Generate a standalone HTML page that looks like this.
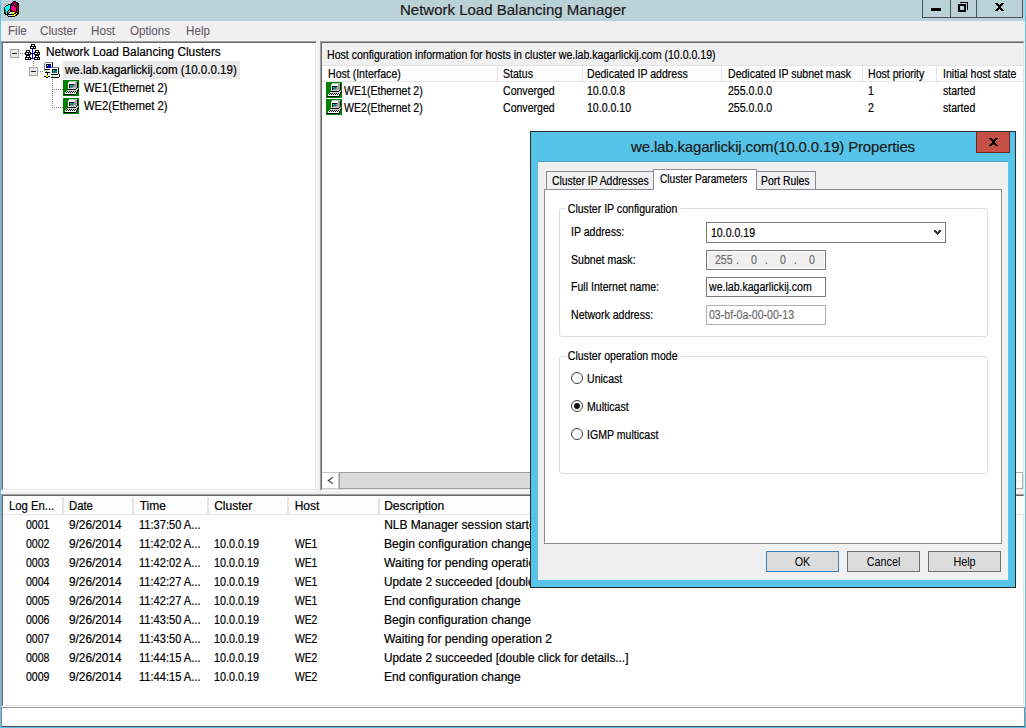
<!DOCTYPE html>
<html><head><meta charset="utf-8">
<style>
*{margin:0;padding:0;box-sizing:border-box}
html,body{width:1026px;height:728px;overflow:hidden;background:#f0f0f0;font-family:"Liberation Sans",sans-serif;color:#000}
.a{position:absolute}
.t{position:absolute;white-space:nowrap;line-height:1;-webkit-text-stroke:0.2px currentColor}
.f11{font-size:12px;transform:scaleX(0.88);transform-origin:0 0}
.f12{font-size:12px}
.sunk{position:absolute;border-top:1px solid #a0a0a0;border-left:1px solid #a0a0a0;border-right:1px solid #fff;border-bottom:1px solid #fff}
.sunk>.in{position:absolute;left:0;top:0;right:0;bottom:0;border-top:1px solid #696969;border-left:1px solid #696969;border-right:1px solid #e3e3e3;border-bottom:1px solid #e3e3e3;background:#fff;overflow:hidden}
.hdr{position:absolute;background:#fdfdfd;border-bottom:1px solid #e5e5e5}
.div{position:absolute;top:1px;width:1px;background:#e5e5e5}
</style></head><body>
<svg width="0" height="0" style="position:absolute"><defs>
<g id="host" shape-rendering="crispEdges"><rect x="0" y="0" width="16" height="16" fill="#008000"/><rect x="6" y="1" width="8" height="1" fill="#c0c0c0"/><rect x="5" y="2" width="1" height="1" fill="#c0c0c0"/><rect x="6" y="2" width="6" height="1" fill="#fff"/><rect x="12" y="2" width="2" height="1" fill="#a0a0a0"/><rect x="14" y="2" width="1" height="1" fill="#000"/><rect x="5" y="3" width="6" height="1" fill="#fff"/><rect x="11" y="3" width="1" height="1" fill="#d0d0d0"/><rect x="12" y="3" width="2" height="1" fill="#a0a0a0"/><rect x="14" y="3" width="1" height="1" fill="#000"/><rect x="5" y="4" width="1" height="1" fill="#fff"/><rect x="6" y="4" width="5" height="1" fill="#000"/><rect x="11" y="4" width="1" height="1" fill="#909090"/><rect x="12" y="4" width="2" height="1" fill="#a0a0a0"/><rect x="14" y="4" width="1" height="1" fill="#000"/><rect x="5" y="5" width="1" height="1" fill="#fff"/><rect x="6" y="5" width="1" height="1" fill="#000"/><rect x="7" y="5" width="1" height="1" fill="#00ffff"/><rect x="8" y="5" width="2" height="1" fill="#008080"/><rect x="10" y="5" width="2" height="1" fill="#909090"/><rect x="12" y="5" width="2" height="1" fill="#a0a0a0"/><rect x="14" y="5" width="1" height="1" fill="#000"/><rect x="5" y="6" width="1" height="1" fill="#fff"/><rect x="6" y="6" width="1" height="1" fill="#000"/><rect x="7" y="6" width="3" height="1" fill="#008080"/><rect x="10" y="6" width="2" height="1" fill="#909090"/><rect x="12" y="6" width="2" height="1" fill="#a0a0a0"/><rect x="14" y="6" width="1" height="1" fill="#000"/><rect x="5" y="7" width="1" height="1" fill="#fff"/><rect x="6" y="7" width="1" height="1" fill="#000"/><rect x="7" y="7" width="4" height="1" fill="#909090"/><rect x="11" y="7" width="1" height="1" fill="#d0d0d0"/><rect x="12" y="7" width="2" height="1" fill="#a0a0a0"/><rect x="14" y="7" width="1" height="1" fill="#000"/><rect x="5" y="8" width="1" height="1" fill="#fff"/><rect x="6" y="8" width="7" height="1" fill="#d0d0d0"/><rect x="13" y="8" width="1" height="1" fill="#000"/><rect x="14" y="8" width="1" height="1" fill="#d0d0d0"/><rect x="5" y="9" width="8" height="1" fill="#000"/><rect x="13" y="9" width="2" height="1" fill="#d0d0d0"/><rect x="15" y="9" width="1" height="1" fill="#000"/><rect x="4" y="10" width="10" height="1" fill="#d0d0d0"/><rect x="14" y="10" width="2" height="1" fill="#000"/><rect x="3" y="11" width="1" height="1" fill="#d0d0d0"/><rect x="4" y="11" width="1" height="1" fill="#000"/><rect x="5" y="11" width="1" height="1" fill="#d0d0d0"/><rect x="6" y="11" width="1" height="1" fill="#000"/><rect x="7" y="11" width="1" height="1" fill="#d0d0d0"/><rect x="8" y="11" width="1" height="1" fill="#000"/><rect x="9" y="11" width="1" height="1" fill="#d0d0d0"/><rect x="10" y="11" width="1" height="1" fill="#000"/><rect x="11" y="11" width="1" height="1" fill="#d0d0d0"/><rect x="12" y="11" width="1" height="1" fill="#000"/><rect x="13" y="11" width="1" height="1" fill="#d0d0d0"/><rect x="14" y="11" width="1" height="1" fill="#000"/><rect x="2" y="12" width="1" height="1" fill="#fff"/><rect x="3" y="12" width="1" height="1" fill="#000"/><rect x="4" y="12" width="1" height="1" fill="#fff"/><rect x="5" y="12" width="1" height="1" fill="#000"/><rect x="6" y="12" width="1" height="1" fill="#fff"/><rect x="7" y="12" width="1" height="1" fill="#000"/><rect x="8" y="12" width="1" height="1" fill="#fff"/><rect x="9" y="12" width="1" height="1" fill="#000"/><rect x="10" y="12" width="1" height="1" fill="#fff"/><rect x="11" y="12" width="1" height="1" fill="#000"/><rect x="12" y="12" width="1" height="1" fill="#fff"/><rect x="13" y="12" width="1" height="1" fill="#000"/><rect x="2" y="13" width="11" height="1" fill="#fff"/><rect x="13" y="13" width="1" height="1" fill="#000"/><rect x="1" y="14" width="12" height="1" fill="#000"/></g></defs></svg>

<!-- window frame -->
<div class="a" style="left:0;top:0;width:1px;height:728px;background:#5ac6ea"></div>
<div class="a" style="left:1025px;top:0;width:1px;height:728px;background:#5ac6ea"></div>
<div class="a" style="left:0;top:727px;width:1026px;height:1px;background:#5ac6ea"></div>
<!-- title bar -->
<div class="a" style="left:1px;top:0;width:1024px;height:21px;background:#bad1d7"></div>
<div class="t" id="title" style="left:400px;top:2px;font-size:15px;color:#1a1a1a">Network Load Balancing Manager</div>


<!-- app icon -->
<svg class="a" style="left:3px;top:0px" width="18" height="18" viewBox="0 0 18 18" shape-rendering="crispEdges"><rect x="10" y="1" width="3" height="1" fill="#000"/><rect x="9" y="2" width="1" height="1" fill="#000"/><rect x="10" y="2" width="1" height="1" fill="#800080"/><rect x="11" y="2" width="1" height="1" fill="#a00000"/><rect x="12" y="2" width="1" height="1" fill="#800080"/><rect x="13" y="2" width="2" height="1" fill="#000"/><rect x="8" y="3" width="1" height="1" fill="#000"/><rect x="9" y="3" width="1" height="1" fill="#a00000"/><rect x="10" y="3" width="1" height="1" fill="#800080"/><rect x="11" y="3" width="1" height="1" fill="#a00000"/><rect x="12" y="3" width="1" height="1" fill="#800080"/><rect x="13" y="3" width="1" height="1" fill="#a00000"/><rect x="14" y="3" width="2" height="1" fill="#000"/><rect x="5" y="4" width="4" height="1" fill="#000"/><rect x="9" y="4" width="1" height="1" fill="#800080"/><rect x="10" y="4" width="1" height="1" fill="#a00000"/><rect x="11" y="4" width="1" height="1" fill="#800080"/><rect x="12" y="4" width="1" height="1" fill="#a00000"/><rect x="13" y="4" width="1" height="1" fill="#800080"/><rect x="14" y="4" width="2" height="1" fill="#000"/><rect x="3" y="5" width="2" height="1" fill="#000"/><rect x="5" y="5" width="2" height="1" fill="#00ffff"/><rect x="7" y="5" width="5" height="1" fill="#000"/><rect x="12" y="5" width="1" height="1" fill="#800080"/><rect x="13" y="5" width="1" height="1" fill="#a00000"/><rect x="14" y="5" width="2" height="1" fill="#000"/><rect x="2" y="6" width="1" height="1" fill="#000"/><rect x="3" y="6" width="4" height="1" fill="#00ffff"/><rect x="7" y="6" width="1" height="1" fill="#000"/><rect x="8" y="6" width="1" height="1" fill="#ff00ff"/><rect x="9" y="6" width="1" height="1" fill="#ff0000"/><rect x="10" y="6" width="1" height="1" fill="#ff00ff"/><rect x="11" y="6" width="1" height="1" fill="#ff0000"/><rect x="12" y="6" width="2" height="1" fill="#000"/><rect x="14" y="6" width="1" height="1" fill="#ff0000"/><rect x="15" y="6" width="1" height="1" fill="#000"/><rect x="1" y="7" width="1" height="1" fill="#000"/><rect x="2" y="7" width="5" height="1" fill="#00ffff"/><rect x="7" y="7" width="1" height="1" fill="#000"/><rect x="8" y="7" width="1" height="1" fill="#ff0000"/><rect x="9" y="7" width="1" height="1" fill="#ff00ff"/><rect x="10" y="7" width="1" height="1" fill="#ff0000"/><rect x="11" y="7" width="1" height="1" fill="#ff00ff"/><rect x="12" y="7" width="1" height="1" fill="#ff0000"/><rect x="13" y="7" width="1" height="1" fill="#000"/><rect x="14" y="7" width="1" height="1" fill="#ff0000"/><rect x="15" y="7" width="1" height="1" fill="#000"/><rect x="1" y="8" width="1" height="1" fill="#000"/><rect x="2" y="8" width="5" height="1" fill="#00ffff"/><rect x="7" y="8" width="1" height="1" fill="#000"/><rect x="8" y="8" width="1" height="1" fill="#ff00ff"/><rect x="9" y="8" width="1" height="1" fill="#ff0000"/><rect x="10" y="8" width="1" height="1" fill="#ff00ff"/><rect x="11" y="8" width="1" height="1" fill="#ff0000"/><rect x="12" y="8" width="1" height="1" fill="#ff00ff"/><rect x="13" y="8" width="1" height="1" fill="#000"/><rect x="14" y="8" width="1" height="1" fill="#800080"/><rect x="15" y="8" width="1" height="1" fill="#000"/><rect x="1" y="9" width="1" height="1" fill="#000"/><rect x="2" y="9" width="4" height="1" fill="#00ffff"/><rect x="6" y="9" width="2" height="1" fill="#000"/><rect x="8" y="9" width="1" height="1" fill="#ff0000"/><rect x="9" y="9" width="1" height="1" fill="#ff00ff"/><rect x="10" y="9" width="1" height="1" fill="#ff0000"/><rect x="11" y="9" width="1" height="1" fill="#ff00ff"/><rect x="12" y="9" width="1" height="1" fill="#ff0000"/><rect x="13" y="9" width="1" height="1" fill="#000"/><rect x="14" y="9" width="1" height="1" fill="#ff0000"/><rect x="15" y="9" width="1" height="1" fill="#000"/><rect x="1" y="10" width="2" height="1" fill="#000"/><rect x="3" y="10" width="2" height="1" fill="#00ffff"/><rect x="5" y="10" width="1" height="1" fill="#000"/><rect x="6" y="10" width="1" height="1" fill="#a0a0a0"/><rect x="7" y="10" width="2" height="1" fill="#000"/><rect x="9" y="10" width="1" height="1" fill="#ff0000"/><rect x="10" y="10" width="1" height="1" fill="#ff00ff"/><rect x="11" y="10" width="1" height="1" fill="#ff0000"/><rect x="12" y="10" width="1" height="1" fill="#ff00ff"/><rect x="13" y="10" width="1" height="1" fill="#000"/><rect x="14" y="10" width="1" height="1" fill="#800080"/><rect x="15" y="10" width="1" height="1" fill="#000"/><rect x="1" y="11" width="1" height="1" fill="#000"/><rect x="2" y="11" width="2" height="1" fill="#00ffff"/><rect x="4" y="11" width="1" height="1" fill="#000"/><rect x="5" y="11" width="2" height="1" fill="#a0a0a0"/><rect x="7" y="11" width="5" height="1" fill="#000"/><rect x="12" y="11" width="1" height="1" fill="#ff0000"/><rect x="13" y="11" width="1" height="1" fill="#000"/><rect x="14" y="11" width="1" height="1" fill="#ff0000"/><rect x="15" y="11" width="1" height="1" fill="#000"/><rect x="1" y="12" width="2" height="1" fill="#000"/><rect x="3" y="12" width="1" height="1" fill="#00ffff"/><rect x="4" y="12" width="1" height="1" fill="#000"/><rect x="5" y="12" width="1" height="1" fill="#a0a0a0"/><rect x="6" y="12" width="1" height="1" fill="#000"/><rect x="7" y="12" width="2" height="1" fill="#d0d0e0"/><rect x="9" y="12" width="3" height="1" fill="#ffff00"/><rect x="12" y="12" width="4" height="1" fill="#000"/><rect x="1" y="13" width="2" height="1" fill="#000"/><rect x="3" y="13" width="1" height="1" fill="#00ffff"/><rect x="4" y="13" width="2" height="1" fill="#000"/><rect x="6" y="13" width="3" height="1" fill="#d0d0e0"/><rect x="9" y="13" width="2" height="1" fill="#ffff00"/><rect x="11" y="13" width="2" height="1" fill="#000"/><rect x="13" y="13" width="1" height="1" fill="#ffff00"/><rect x="14" y="13" width="2" height="1" fill="#000"/><rect x="2" y="14" width="9" height="1" fill="#000"/><rect x="11" y="14" width="2" height="1" fill="#ffff00"/><rect x="13" y="14" width="2" height="1" fill="#000"/><rect x="4" y="15" width="1" height="1" fill="#000"/><rect x="5" y="15" width="4" height="1" fill="#d0d0e0"/><rect x="9" y="15" width="3" height="1" fill="#ffff00"/><rect x="12" y="15" width="2" height="1" fill="#000"/><rect x="5" y="16" width="7" height="1" fill="#000"/></svg>
<!-- caption buttons -->
<div class="a" style="left:922px;top:0;width:101px;height:18px;border:1px solid #4b5057;border-top:none;background:#bad1d7"></div>
<div class="a" style="left:950px;top:0;width:1px;height:17px;background:#4b5057"></div>
<div class="a" style="left:976px;top:0;width:1px;height:17px;background:#4b5057"></div>
<div class="a" style="left:931px;top:8px;width:10px;height:3px;background:#000"></div>
<svg class="a" style="left:957px;top:2px" width="12" height="11" viewBox="0 0 12 11" shape-rendering="crispEdges">
<path d="M3 0h8v8h-1v-7h-7z" fill="#000"/><path d="M1 2h8v8h-8z M3 4v4h4v-4z" fill="#000" fill-rule="evenodd"/>
</svg>
<svg class="a" style="left:995px;top:3px" width="9" height="8" viewBox="0 0 9 8" shape-rendering="crispEdges"><path d="M0 0h3v1h1v1h1v-1h1v-1h3v1h-1v1h-1v1h-1v2h1v1h1v1h1v1h-3v-1h-1v-1h-1v1h-1v1h-3v-1h1v-1h1v-1h1v-2h-1v-1h-1v-1h-1z" fill="#000"/></svg>

<!-- menu -->
<div class="t f12" style="left:8px;top:25px;color:#665c66;-webkit-text-stroke:0.1px currentColor;transform:scaleX(0.97);transform-origin:0 0">File</div>
<div class="t f12" style="left:40px;top:25px;color:#665c66;-webkit-text-stroke:0.1px currentColor;transform:scaleX(0.97);transform-origin:0 0">Cluster</div>
<div class="t f12" style="left:91px;top:25px;color:#665c66;-webkit-text-stroke:0.1px currentColor;transform:scaleX(0.97);transform-origin:0 0">Host</div>
<div class="t f12" style="left:130px;top:25px;color:#665c66;-webkit-text-stroke:0.1px currentColor;transform:scaleX(0.97);transform-origin:0 0">Options</div>
<div class="t f12" style="left:186px;top:25px;color:#665c66;-webkit-text-stroke:0.1px currentColor;transform:scaleX(0.97);transform-origin:0 0">Help</div>

<!-- left tree panel -->
<div class="sunk" style="left:1px;top:41px;width:316px;height:450px"><div class="in"></div></div>


<!-- tree content -->
<div class="a" style="left:10px;top:49px;width:9px;height:9px;border:1px solid #a5a5a5;background:#e8e8e8"></div>
<div class="a" style="left:12px;top:53px;width:5px;height:1px;background:#222"></div>
<div class="a" style="left:20px;top:53px;width:5px;height:1px;background-image:linear-gradient(90deg,#777 50%,transparent 50%);background-size:2px 1px"></div>
<svg class="a" style="left:24px;top:43px" width="17" height="18" viewBox="0 0 17 18" shape-rendering="crispEdges"><rect x="7" y="1" width="4" height="1" fill="#000"/><rect x="7" y="2" width="1" height="1" fill="#000"/><rect x="10" y="2" width="1" height="1" fill="#000"/><rect x="8" y="2" width="2" height="1" fill="#fff"/><rect x="6" y="3" width="6" height="1" fill="#000"/><rect x="6" y="4" width="1" height="1" fill="#000"/><rect x="9" y="4" width="1" height="1" fill="#000"/><rect x="11" y="4" width="1" height="1" fill="#000"/><rect x="7" y="4" width="2" height="1" fill="#fff"/><rect x="10" y="4" width="1" height="1" fill="#fff"/><rect x="6" y="5" width="6" height="1" fill="#000"/><rect x="2" y="7" width="4" height="1" fill="#000"/><rect x="2" y="8" width="1" height="1" fill="#000"/><rect x="5" y="8" width="1" height="1" fill="#000"/><rect x="3" y="8" width="2" height="1" fill="#fff"/><rect x="1" y="9" width="6" height="1" fill="#000"/><rect x="1" y="10" width="1" height="1" fill="#000"/><rect x="4" y="10" width="1" height="1" fill="#000"/><rect x="6" y="10" width="1" height="1" fill="#000"/><rect x="2" y="10" width="2" height="1" fill="#fff"/><rect x="5" y="10" width="1" height="1" fill="#fff"/><rect x="1" y="11" width="6" height="1" fill="#000"/><rect x="2" y="12" width="4" height="1" fill="#000"/><rect x="2" y="13" width="1" height="1" fill="#000"/><rect x="5" y="13" width="1" height="1" fill="#000"/><rect x="3" y="13" width="2" height="1" fill="#fff"/><rect x="1" y="14" width="6" height="1" fill="#000"/><rect x="1" y="15" width="1" height="1" fill="#000"/><rect x="4" y="15" width="1" height="1" fill="#000"/><rect x="6" y="15" width="1" height="1" fill="#000"/><rect x="2" y="15" width="2" height="1" fill="#fff"/><rect x="5" y="15" width="1" height="1" fill="#fff"/><rect x="1" y="16" width="6" height="1" fill="#000"/><rect x="11" y="7" width="4" height="1" fill="#000"/><rect x="11" y="8" width="1" height="1" fill="#000"/><rect x="14" y="8" width="1" height="1" fill="#000"/><rect x="12" y="8" width="2" height="1" fill="#fff"/><rect x="10" y="9" width="6" height="1" fill="#000"/><rect x="10" y="10" width="1" height="1" fill="#000"/><rect x="13" y="10" width="1" height="1" fill="#000"/><rect x="15" y="10" width="1" height="1" fill="#000"/><rect x="11" y="10" width="2" height="1" fill="#fff"/><rect x="14" y="10" width="1" height="1" fill="#fff"/><rect x="10" y="11" width="6" height="1" fill="#000"/><rect x="11" y="12" width="4" height="1" fill="#000"/><rect x="11" y="13" width="1" height="1" fill="#000"/><rect x="14" y="13" width="1" height="1" fill="#000"/><rect x="12" y="13" width="2" height="1" fill="#fff"/><rect x="10" y="14" width="6" height="1" fill="#000"/><rect x="10" y="15" width="1" height="1" fill="#000"/><rect x="13" y="15" width="1" height="1" fill="#000"/><rect x="15" y="15" width="1" height="1" fill="#000"/><rect x="11" y="15" width="2" height="1" fill="#fff"/><rect x="14" y="15" width="1" height="1" fill="#fff"/><rect x="10" y="16" width="6" height="1" fill="#000"/><rect x="8" y="6" width="1" height="10" fill="#00f"/><rect x="7" y="10" width="3" height="1" fill="#00f"/><rect x="7" y="15" width="3" height="1" fill="#00f"/></svg>
<div class="a" style="left:33px;top:61px;width:1px;height:6px;background-image:linear-gradient(180deg,#777 50%,transparent 50%);background-size:1px 2px"></div>
<div class="t f12" style="left:45.6px;top:45.6px;transform:scaleX(0.985);transform-origin:0 0">Network Load Balancing Clusters</div>

<div class="a" style="left:29px;top:67px;width:9px;height:9px;border:1px solid #a5a5a5;background:#e8e8e8"></div>
<div class="a" style="left:31px;top:71px;width:5px;height:1px;background:#222"></div>
<div class="a" style="left:40px;top:71px;width:4px;height:1px;background-image:linear-gradient(90deg,#777 50%,transparent 50%);background-size:2px 1px"></div>
<svg class="a" style="left:43px;top:61px" width="18" height="18" viewBox="0 0 18 18" shape-rendering="crispEdges"><rect x="2" y="2" width="7" height="9" fill="#fff"/><rect x="2" y="1" width="8" height="1" fill="#808080"/><rect x="1" y="2" width="1" height="8" fill="#808080"/><rect x="9" y="2" width="1" height="5" fill="#000"/><rect x="3" y="3" width="5" height="4" fill="#000"/><rect x="4" y="4" width="4" height="3" fill="#0000f0"/><rect x="4" y="4" width="1" height="1" fill="#00ffff"/><rect x="2" y="8" width="5" height="1" fill="#000"/><rect x="3" y="10" width="1" height="1" fill="#00e000"/><rect x="2" y="11" width="5" height="1" fill="#000"/><rect x="4" y="12" width="1" height="2" fill="#000"/><rect x="1" y="15" width="6" height="1" fill="#000"/><rect x="3" y="14" width="2" height="2" fill="#f0f000"/><rect x="3" y="16" width="2" height="1" fill="#000"/><rect x="8" y="7" width="7" height="9" fill="#fff"/><rect x="8" y="6" width="8" height="1" fill="#808080"/><rect x="15" y="7" width="1" height="6" fill="#000"/><rect x="9" y="8" width="5" height="4" fill="#000"/><rect x="10" y="9" width="4" height="3" fill="#008080"/><rect x="10" y="9" width="1" height="1" fill="#00ffff"/><rect x="8" y="13" width="7" height="1" fill="#000"/><rect x="16" y="13" width="1" height="3" fill="#000"/><rect x="9" y="15" width="1" height="1" fill="#00e000"/><rect x="8" y="16" width="8" height="1" fill="#000"/></svg>
<div class="a" style="left:63px;top:61px;width:177px;height:18px;background:#eaeaea"></div>
<div class="t f12" style="left:65px;top:63.6px;transform:scaleX(0.965);transform-origin:0 0">we.lab.kagarlickij.com (10.0.0.19)</div>
<div class="a" style="left:52px;top:79px;width:1px;height:29px;background-image:linear-gradient(180deg,#777 50%,transparent 50%);background-size:1px 2px"></div>
<div class="a" style="left:54px;top:89px;width:9px;height:1px;background-image:linear-gradient(90deg,#777 50%,transparent 50%);background-size:2px 1px"></div>
<div class="a" style="left:54px;top:107px;width:9px;height:1px;background-image:linear-gradient(90deg,#777 50%,transparent 50%);background-size:2px 1px"></div>
<svg class="a" style="left:63px;top:80px" width="16" height="16"><use href="#host"/></svg>
<svg class="a" style="left:63px;top:98px" width="16" height="16"><use href="#host"/></svg>
<div class="t f12" style="left:84px;top:81.6px;transform:scaleX(0.935);transform-origin:0 0">WE1(Ethernet 2)</div>
<div class="t f12" style="left:84px;top:99.6px;transform:scaleX(0.935);transform-origin:0 0">WE2(Ethernet 2)</div>

<!-- right panel -->
<div class="sunk" style="left:320px;top:41px;width:705px;height:450px"><div class="in" style="background:#fff"></div></div>


<!-- right content -->
<div class="a" style="left:322px;top:43px;width:701px;height:22px;background:#f0f0f0"></div>
<div class="t f11" style="left:327px;top:49.15px">Host configuration information for hosts in cluster we.lab.kagarlickij.com (10.0.0.19)</div>
<div class="hdr" style="left:322px;top:65px;width:701px;height:17px;border-top:1px solid #e3e3e3"></div>
<div class="div" style="left:497px;top:66px;height:15px"></div>
<div class="div" style="left:582px;top:66px;height:15px"></div>
<div class="div" style="left:721px;top:66px;height:15px"></div>
<div class="div" style="left:862px;top:66px;height:15px"></div>
<div class="div" style="left:936px;top:66px;height:15px"></div>
<div class="t f11" style="left:328px;top:68.45px">Host (Interface)</div>
<div class="t f11" style="left:503px;top:68.45px">Status</div>
<div class="t f11" style="left:587px;top:68.45px">Dedicated IP address</div>
<div class="t f11" style="left:728px;top:68.45px">Dedicated IP subnet mask</div>
<div class="t f11" style="left:868px;top:68.45px">Host priority</div>
<div class="t f11" style="left:943px;top:68.45px">Initial host state</div>
<svg class="a" style="left:326px;top:82px" width="16" height="16"><use href="#host"/></svg>
<svg class="a" style="left:326px;top:99px" width="16" height="16"><use href="#host"/></svg>
<div class="t f11" style="left:344px;top:84.65px">WE1(Ethernet 2)</div>
<div class="t f11" style="left:503px;top:84.65px">Converged</div>
<div class="t f11" style="left:587px;top:84.65px">10.0.0.8</div>
<div class="t f11" style="left:728px;top:84.65px">255.0.0.0</div>
<div class="t f11" style="left:868px;top:84.65px">1</div>
<div class="t f11" style="left:943px;top:84.65px">started</div>
<div class="t f11" style="left:344px;top:101.65px">WE2(Ethernet 2)</div>
<div class="t f11" style="left:503px;top:101.65px">Converged</div>
<div class="t f11" style="left:587px;top:101.65px">10.0.0.10</div>
<div class="t f11" style="left:728px;top:101.65px">255.0.0.0</div>
<div class="t f11" style="left:868px;top:101.65px">2</div>
<div class="t f11" style="left:943px;top:101.65px">started</div>
<!-- h scrollbar -->
<div class="a" style="left:322px;top:472px;width:701px;height:17px;background:#f0f0f0;border-top:1px solid #c8c8c8"></div>
<div class="a" style="left:322px;top:472px;width:17px;height:17px;background:#fff;border:1px solid #c8c8c8;border-left:none"></div>
<svg class="a" style="left:326px;top:475px" width="8" height="10" viewBox="0 0 8 10"><path d="M6.8 2.3L2.4 5.5L6.8 8.7" stroke="#444" stroke-width="1.2" fill="none"/></svg>
<div class="a" style="left:339px;top:472px;width:676px;height:17px;background:#dadada;border:1px solid #9e9e9e"></div>
<div class="a" style="left:1006px;top:472px;width:17px;height:17px;background:#fff;border:1px solid #adadad"></div>
<svg class="a" style="left:1010px;top:475px" width="8" height="10" viewBox="0 0 8 10"><path d="M1.2 2.3L5.6 5.5L1.2 8.7" stroke="#444" stroke-width="1.2" fill="none"/></svg>

<!-- log panel -->
<div class="sunk" style="left:1px;top:494px;width:1024px;height:213px"><div class="in"></div></div>


<!-- log content -->
<div class="hdr" style="left:3px;top:496px;width:1021px;height:19px"></div>
<div class="div" style="left:62px;top:497px;height:17px;width:2px"></div>
<div class="div" style="left:132px;top:497px;height:17px;width:2px"></div>
<div class="div" style="left:207px;top:497px;height:17px;width:2px"></div>
<div class="div" style="left:287px;top:497px;height:17px;width:2px"></div>
<div class="div" style="left:378px;top:497px;height:17px;width:2px"></div>
<div class="t f12" style="left:8.5px;top:499.8px;transform:scaleX(0.94);transform-origin:0 0">Log En...</div>
<div class="t f12" style="left:69.4px;top:499.8px;transform:scaleX(0.94);transform-origin:0 0">Date</div>
<div class="t f12" style="left:139.7px;top:499.8px">Time</div>
<div class="t f12" style="left:214.2px;top:499.8px">Cluster</div>
<div class="t f12" style="left:294.7px;top:499.8px">Host</div>
<div class="t f12" style="left:384.2px;top:499.8px">Description</div>
<div class="t f12" style="left:25.6px;top:518.5px;transform:scaleX(0.88);transform-origin:0 0">0001</div>
<div class="t f12" style="left:69.4px;top:518.5px;transform:scaleX(0.985);transform-origin:0 0">9/26/2014</div>
<div class="t f12" style="left:138.7px;top:518.5px;transform:scaleX(0.925);transform-origin:0 0">11:37:50 A...</div>
<div class="t f12" style="left:384.2px;top:518.5px;transform:scaleX(1.0);transform-origin:0 0">NLB Manager session started</div>
<div class="t f12" style="left:25.6px;top:537.5px;transform:scaleX(0.88);transform-origin:0 0">0002</div>
<div class="t f12" style="left:69.4px;top:537.5px;transform:scaleX(0.985);transform-origin:0 0">9/26/2014</div>
<div class="t f12" style="left:138.7px;top:537.5px;transform:scaleX(0.925);transform-origin:0 0">11:42:02 A...</div>
<div class="t f12" style="left:214.2px;top:537.5px;transform:scaleX(0.9);transform-origin:0 0">10.0.0.19</div>
<div class="t f12" style="left:294.7px;top:537.5px;transform:scaleX(0.86);transform-origin:0 0">WE1</div>
<div class="t f12" style="left:384.2px;top:537.5px;transform:scaleX(1.01);transform-origin:0 0">Begin configuration change</div>
<div class="t f12" style="left:25.6px;top:556.5px;transform:scaleX(0.88);transform-origin:0 0">0003</div>
<div class="t f12" style="left:69.4px;top:556.5px;transform:scaleX(0.985);transform-origin:0 0">9/26/2014</div>
<div class="t f12" style="left:138.7px;top:556.5px;transform:scaleX(0.925);transform-origin:0 0">11:42:02 A...</div>
<div class="t f12" style="left:214.2px;top:556.5px;transform:scaleX(0.9);transform-origin:0 0">10.0.0.19</div>
<div class="t f12" style="left:294.7px;top:556.5px;transform:scaleX(0.86);transform-origin:0 0">WE1</div>
<div class="t f12" style="left:384.2px;top:556.5px;transform:scaleX(1.01);transform-origin:0 0">Waiting for pending operation 2</div>
<div class="t f12" style="left:25.6px;top:575.5px;transform:scaleX(0.88);transform-origin:0 0">0004</div>
<div class="t f12" style="left:69.4px;top:575.5px;transform:scaleX(0.985);transform-origin:0 0">9/26/2014</div>
<div class="t f12" style="left:138.7px;top:575.5px;transform:scaleX(0.925);transform-origin:0 0">11:42:27 A...</div>
<div class="t f12" style="left:214.2px;top:575.5px;transform:scaleX(0.9);transform-origin:0 0">10.0.0.19</div>
<div class="t f12" style="left:294.7px;top:575.5px;transform:scaleX(0.86);transform-origin:0 0">WE1</div>
<div class="t f12" style="left:384.2px;top:575.5px;transform:scaleX(0.985);transform-origin:0 0">Update 2 succeeded [double click for details...]</div>
<div class="t f12" style="left:25.6px;top:594.5px;transform:scaleX(0.88);transform-origin:0 0">0005</div>
<div class="t f12" style="left:69.4px;top:594.5px;transform:scaleX(0.985);transform-origin:0 0">9/26/2014</div>
<div class="t f12" style="left:138.7px;top:594.5px;transform:scaleX(0.925);transform-origin:0 0">11:42:27 A...</div>
<div class="t f12" style="left:214.2px;top:594.5px;transform:scaleX(0.9);transform-origin:0 0">10.0.0.19</div>
<div class="t f12" style="left:294.7px;top:594.5px;transform:scaleX(0.86);transform-origin:0 0">WE1</div>
<div class="t f12" style="left:384.2px;top:594.5px;transform:scaleX(1.005);transform-origin:0 0">End configuration change</div>
<div class="t f12" style="left:25.6px;top:613.5px;transform:scaleX(0.88);transform-origin:0 0">0006</div>
<div class="t f12" style="left:69.4px;top:613.5px;transform:scaleX(0.985);transform-origin:0 0">9/26/2014</div>
<div class="t f12" style="left:138.7px;top:613.5px;transform:scaleX(0.925);transform-origin:0 0">11:43:50 A...</div>
<div class="t f12" style="left:214.2px;top:613.5px;transform:scaleX(0.9);transform-origin:0 0">10.0.0.19</div>
<div class="t f12" style="left:294.7px;top:613.5px;transform:scaleX(0.86);transform-origin:0 0">WE2</div>
<div class="t f12" style="left:384.2px;top:613.5px;transform:scaleX(1.01);transform-origin:0 0">Begin configuration change</div>
<div class="t f12" style="left:25.6px;top:632.5px;transform:scaleX(0.88);transform-origin:0 0">0007</div>
<div class="t f12" style="left:69.4px;top:632.5px;transform:scaleX(0.985);transform-origin:0 0">9/26/2014</div>
<div class="t f12" style="left:138.7px;top:632.5px;transform:scaleX(0.925);transform-origin:0 0">11:43:50 A...</div>
<div class="t f12" style="left:214.2px;top:632.5px;transform:scaleX(0.9);transform-origin:0 0">10.0.0.19</div>
<div class="t f12" style="left:294.7px;top:632.5px;transform:scaleX(0.86);transform-origin:0 0">WE2</div>
<div class="t f12" style="left:384.2px;top:632.5px;transform:scaleX(1.01);transform-origin:0 0">Waiting for pending operation 2</div>
<div class="t f12" style="left:25.6px;top:651.5px;transform:scaleX(0.88);transform-origin:0 0">0008</div>
<div class="t f12" style="left:69.4px;top:651.5px;transform:scaleX(0.985);transform-origin:0 0">9/26/2014</div>
<div class="t f12" style="left:138.7px;top:651.5px;transform:scaleX(0.925);transform-origin:0 0">11:44:15 A...</div>
<div class="t f12" style="left:214.2px;top:651.5px;transform:scaleX(0.9);transform-origin:0 0">10.0.0.19</div>
<div class="t f12" style="left:294.7px;top:651.5px;transform:scaleX(0.86);transform-origin:0 0">WE2</div>
<div class="t f12" style="left:384.2px;top:651.5px;transform:scaleX(0.985);transform-origin:0 0">Update 2 succeeded [double click for details...]</div>
<div class="t f12" style="left:25.6px;top:670.5px;transform:scaleX(0.88);transform-origin:0 0">0009</div>
<div class="t f12" style="left:69.4px;top:670.5px;transform:scaleX(0.985);transform-origin:0 0">9/26/2014</div>
<div class="t f12" style="left:138.7px;top:670.5px;transform:scaleX(0.925);transform-origin:0 0">11:44:15 A...</div>
<div class="t f12" style="left:214.2px;top:670.5px;transform:scaleX(0.9);transform-origin:0 0">10.0.0.19</div>
<div class="t f12" style="left:294.7px;top:670.5px;transform:scaleX(0.86);transform-origin:0 0">WE2</div>
<div class="t f12" style="left:384.2px;top:670.5px;transform:scaleX(1.005);transform-origin:0 0">End configuration change</div>

<div class="a" style="left:600px;top:588px;width:60px;height:3px;background:#fff"></div>
<!-- status bar -->
<div class="a" style="left:1px;top:707px;width:1024px;height:20px;background:#fff;border-top:1px solid #9a9a9a;border-left:1px solid #8a8a8a;border-bottom:1px solid #4a4a4a;border-right:1px solid #8a8a8a"></div>

<!-- dialog -->
<div class="a" id="dlg" style="left:530px;top:131px;width:486px;height:457px;background:#56c4e9;border:1px solid #2b2b2b"></div>
<div class="t" style="left:530px;width:486px;text-align:center;top:138.9px;font-size:15px;letter-spacing:-0.16px;color:#1a1a1a">we.lab.kagarlickij.com(10.0.0.19) Properties</div>
<div class="a" style="left:976px;top:132px;width:34px;height:21px;background:#c75046;border:1px solid #6e2a24;border-top:none"></div>
<svg class="a" style="left:989px;top:138px" width="9" height="8" viewBox="0 0 9 8" shape-rendering="crispEdges"><path d="M0 0h3v1h1v1h1v-1h1v-1h3v1h-1v1h-1v1h-1v2h1v1h1v1h1v1h-3v-1h-1v-1h-1v1h-1v1h-3v-1h1v-1h1v-1h1v-2h-1v-1h-1v-1h-1z" fill="#000"/></svg>
<!-- client -->
<div class="a" style="left:538px;top:161px;width:470px;height:419px;background:#f0f0f0;border-top:1px solid #4aa3c2"></div>
<!-- tab panel -->
<div class="a" style="left:544px;top:189px;width:458px;height:355px;background:#fff;border:1px solid #898c95"></div>
<div class="a" style="left:546px;top:171px;width:108px;height:19px;background:#f0f0f0;border:1px solid #898c95"></div>
<div class="a" style="left:756px;top:171px;width:60px;height:19px;background:#f0f0f0;border:1px solid #898c95"></div>
<div class="a" style="left:653px;top:169px;width:104px;height:21px;background:#fff;border:1px solid #898c95;border-bottom:none"></div>
<div class="a" style="left:654px;top:189px;width:102px;height:2px;background:#fff"></div>
<div class="t f11" style="left:551.5px;top:175.3px;transform:scaleX(0.865)">Cluster IP Addresses</div>
<div class="t f11" style="left:660.2px;top:172.65px;transform:scaleX(0.845)">Cluster Parameters</div>
<div class="t f11" style="left:760.5px;top:175.3px;transform:scaleX(0.865)">Port Rules</div>
<!-- group 1 -->
<div class="a" style="left:559px;top:208px;width:429px;height:129px;border:1px solid #d5dfe5;border-radius:3px"></div>
<div class="t f11" style="left:565.5px;top:202.85px;background:#fff;padding:0 2px">Cluster IP configuration</div>
<div class="t f11" style="left:571px;top:225.75px">IP address:</div>
<div class="t f11" style="left:571px;top:253.95px">Subnet mask:</div>
<div class="t f11" style="left:571px;top:280.95px">Full Internet name:</div>
<div class="t f11" style="left:571px;top:309.35px">Network address:</div>
<div class="a" style="left:706px;top:222px;width:240px;height:21px;background:#fff;border:1px solid #7a7a7a"></div>
<div class="t f11" style="left:710.5px;top:226.75px">10.0.0.19</div>
<svg class="a" style="left:933px;top:229px" width="9" height="8" viewBox="0 0 9 8" shape-rendering="crispEdges"><path d="M1 1h2v1h1v1h1v-1h1v-1h2v2h-1v1h-1v1h-1v1h-1v-1h-1v-1h-1v-1h-1z" fill="#3a3a3a"/></svg>
<div class="a" style="left:706px;top:250px;width:120px;height:20px;background:#f0f0f0;border:1px solid #7a7a7a;box-shadow:inset 0 0 0 1px #fff"></div>
<div class="t f11" style="left:714.5px;top:253.95px;color:#6d6d6d">255</div>
<div class="t f11" style="left:736px;top:253.95px;color:#6d6d6d">.</div>
<div class="t f11" style="left:750.5px;top:253.95px;color:#6d6d6d">0</div>
<div class="t f11" style="left:765px;top:253.95px;color:#6d6d6d">.</div>
<div class="t f11" style="left:779.5px;top:253.95px;color:#6d6d6d">0</div>
<div class="t f11" style="left:794px;top:253.95px;color:#6d6d6d">.</div>
<div class="t f11" style="left:808.5px;top:253.95px;color:#6d6d6d">0</div>
<div class="a" style="left:706px;top:277px;width:120px;height:20px;background:#fff;border:1px solid #7a7a7a"></div>
<div class="t f11" style="left:708.5px;top:281.25px">we.lab.kagarlickij.com</div>
<div class="a" style="left:706px;top:305px;width:120px;height:20px;background:#fff;border:1px solid #abb1ba"></div>
<div class="t f11" style="left:708.5px;top:309.15px;color:#6d6d6d">03-bf-0a-00-00-13</div>
<!-- group 2 -->
<div class="a" style="left:559px;top:356px;width:429px;height:118px;border:1px solid #d5dfe5;border-radius:3px"></div>
<div class="t f11" style="left:565.5px;top:350.05px;background:#fff;padding:0 2px">Cluster operation mode</div>
<svg class="a" style="left:571px;top:372px" width="12" height="12" viewBox="0 0 12 12"><circle cx="6" cy="6" r="5.5" fill="#fff" stroke="#3a3a3a" stroke-width="1"/></svg>
<svg class="a" style="left:571px;top:400px" width="12" height="12" viewBox="0 0 12 12"><circle cx="6" cy="6" r="5.5" fill="#fff" stroke="#3a3a3a" stroke-width="1"/><circle cx="6" cy="6" r="3" fill="#111"/></svg>
<svg class="a" style="left:571px;top:428px" width="12" height="12" viewBox="0 0 12 12"><circle cx="6" cy="6" r="5.5" fill="#fff" stroke="#3a3a3a" stroke-width="1"/></svg>
<div class="t f11" style="left:587px;top:372.65px">Unicast</div>
<div class="t f11" style="left:587px;top:400.65px">Multicast</div>
<div class="t f11" style="left:587px;top:428.65px">IGMP multicast</div>
<!-- buttons -->
<div class="a" style="left:766px;top:551px;width:73px;height:21px;background:#dcdcdc;border:1px solid #3c7fb1"></div>
<div class="a" style="left:847px;top:551px;width:73px;height:21px;background:#dcdcdc;border:1px solid #707070"></div>
<div class="a" style="left:928px;top:551px;width:73px;height:21px;background:#dcdcdc;border:1px solid #707070"></div>
<div class="t f12" style="left:766px;width:73px;text-align:center;top:556.4px;transform:scaleX(0.9);transform-origin:50% 0;-webkit-text-stroke:0">OK</div>
<div class="t f12" style="left:847px;width:73px;text-align:center;top:556.4px;transform:scaleX(0.9);transform-origin:50% 0;-webkit-text-stroke:0">Cancel</div>
<div class="t f12" style="left:928px;width:73px;text-align:center;top:556.4px;transform:scaleX(0.9);transform-origin:50% 0;-webkit-text-stroke:0">Help</div>
</body></html>
